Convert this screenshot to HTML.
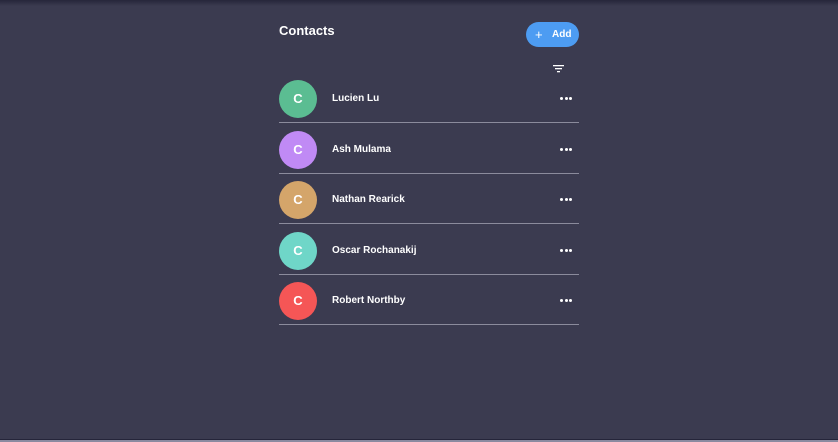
<!DOCTYPE html>
<html><head><style>
body{margin:0;width:838px;height:442px;background:#3b3b50;font-family:"Liberation Sans",sans-serif;position:relative;overflow:hidden}
.top{position:absolute;left:0;top:0;width:838px;height:6px;background:linear-gradient(#26263a,#3b3b50)}
.bot{position:absolute;left:0;top:439px;width:838px;height:1px;background:#25253a}
.bot2{position:absolute;left:0;top:440px;width:838px;height:2px;background:#8a8aa0}
.title{position:absolute;left:279px;top:23px;color:#fff;font-weight:bold;font-size:13px}
.add{position:absolute;left:526px;top:22px;width:53px;height:25px;border-radius:13px;background:#4d9cf2;color:#fff;font-size:10px;font-weight:bold;line-height:25px}
.add span{position:absolute}
.row{position:absolute;left:279px;width:300px;height:43px;border-bottom:1px solid #8b8b9c}
.av{position:absolute;left:0;top:1px;width:38px;height:38px;border-radius:50%;color:#fff;font-weight:bold;font-size:13px;text-align:center;line-height:38px}
.nm{position:absolute;left:53px;top:14px;color:#fff;font-size:10px;font-weight:bold}
.d{position:absolute;top:18px;width:3px;height:3px;border-radius:50%;background:#fff}
</style></head><body>
<div class="top"></div>
<div class="title">Contacts</div>
<div class="add"><span style="left:9px;font-size:13px;font-weight:normal">+</span><span style="left:26px">Add</span></div>
<svg style="position:absolute;left:553px;top:65px" width="11" height="8"><rect x="0" y="0" width="11" height="1.3" fill="#fff"/><rect x="2" y="3" width="7" height="1.3" fill="#fff"/><rect x="4" y="6" width="3" height="1.3" fill="#fff"/></svg>
<div class="row" style="top:79px"><div class="av" style="background:#5bbd92">C</div><div class="nm">Lucien Lu</div><div class="d" style="left:281px"></div><div class="d" style="left:285.5px"></div><div class="d" style="left:290px"></div></div>
<div class="row" style="top:130px"><div class="av" style="background:#c08af5">C</div><div class="nm">Ash Mulama</div><div class="d" style="left:281px"></div><div class="d" style="left:285.5px"></div><div class="d" style="left:290px"></div></div>
<div class="row" style="top:180px"><div class="av" style="background:#d4a56a">C</div><div class="nm">Nathan Rearick</div><div class="d" style="left:281px"></div><div class="d" style="left:285.5px"></div><div class="d" style="left:290px"></div></div>
<div class="row" style="top:231px"><div class="av" style="background:#6fd6c8">C</div><div class="nm">Oscar Rochanakij</div><div class="d" style="left:281px"></div><div class="d" style="left:285.5px"></div><div class="d" style="left:290px"></div></div>
<div class="row" style="top:281px"><div class="av" style="background:#f55656">C</div><div class="nm">Robert Northby</div><div class="d" style="left:281px"></div><div class="d" style="left:285.5px"></div><div class="d" style="left:290px"></div></div>
<div class="bot"></div><div class="bot2"></div>
</body></html>
